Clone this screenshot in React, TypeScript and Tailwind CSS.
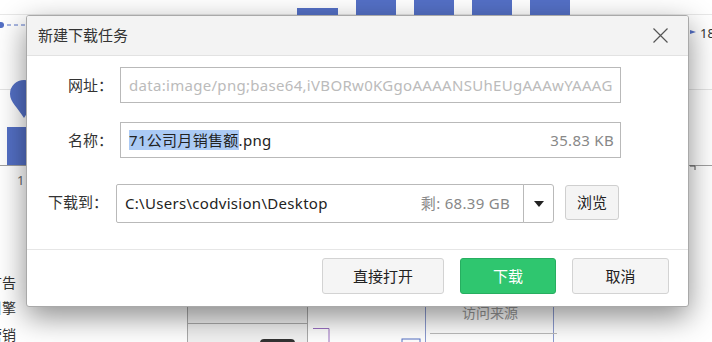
const font = "font-['Noto_Sans','Noto_Sans_CJK_SC',sans-serif]";

const Background = () => (
  <svg className="absolute inset-0" width={712} height={342} viewBox="0 0 712 342">
    <line x1={0} y1={14.5} x2={712} y2={14.5} stroke="#e8e8e8" />
    {/* bars at top */}
    <rect x={297} y={8} width={41} height={7} fill="#5470c6" />
    <rect x={356} y={0} width={40} height={15} fill="#5470c6" />
    <rect x={414} y={0} width={40} height={15} fill="#5470c6" />
    <rect x={472} y={0} width={40} height={15} fill="#5470c6" />
    <rect x={530} y={0} width={40} height={15} fill="#5470c6" />
    <line x1={0} y1={25} x2={30} y2={25} stroke="#5470c6" strokeDasharray="4 3" />
    <circle cx={1} cy={25} r={3} fill="#5470c6" />
    <line x1={0} y1={89.5} x2={712} y2={89.5} stroke="#e4e4e4" />
    <path d="M24 118 C18 108 10 102 10 94 A14 14 0 0 1 38 94 C38 102 30 108 24 118 Z" fill="#5470c6" />
    <rect x={7} y={127} width={24} height={38} fill="#5470c6" />
    <line x1={0} y1={165.5} x2={712} y2={165.5} stroke="#a0a0a0" />
    <line x1={690} y1={166} x2={695} y2={166} stroke="#555" />
    <line x1={695} y1={166} x2={695} y2={170} stroke="#555" />
    <text x={17} y={185} fontSize={13} fill="#666" fontFamily="Noto Sans">1</text>
    <text x={16} y={288} fontSize={14} fill="#333" textAnchor="end" fontFamily="Noto Sans CJK SC">广告</text>
    <text x={16} y={313} fontSize={14} fill="#333" textAnchor="end" fontFamily="Noto Sans CJK SC">引擎</text>
    <text x={16} y={340} fontSize={14} fill="#333" textAnchor="end" fontFamily="Noto Sans CJK SC">营销</text>
    <path d="M690 30 L696 32 L690 34 Z" fill="#5470c6" />
    <text x={700} y={38} fontSize={13} fill="#333" fontFamily="Noto Sans">18</text>
    {/* table fragments below dialog */}
    <rect x={187.5} y={290.5} width={120} height={60} fill="#f2f2f2" stroke="#aaa" />
    <line x1={187} y1={323.5} x2={307} y2={323.5} stroke="#aaa" />
    <text x={192} y={354} fontSize={14} fill="#333" fontFamily="Noto Sans CJK SC">其他</text>
    <rect x={260} y={339} width={35} height={10} rx={4} fill="#333" />
    <path d="M313 328.5 H329 V342" stroke="#9b6fc2" fill="none" />
    <rect x={402} y={339} width={18} height={8} fill="none" stroke="#5470c6" />
    <line x1={425.5} y1={290} x2={425.5} y2={342} stroke="#8c9bd0" />
    <line x1={553.5} y1={290} x2={553.5} y2={342} stroke="#8c9bd0" />
    <text x={462} y={318} fontSize={14} fill="#999" fontFamily="Noto Sans CJK SC">访问来源</text>
    <line x1={430} y1={333.5} x2={557} y2={333.5} stroke="#bbb" />
  </svg>
);

const Field = ({ children, className }: { children: React.ReactNode; className?: string }) => (
  <div className={`flex items-center border border-[#b9b9b9] bg-white pl-[8px] tracking-[0.3px] ${className ?? ""}`}>
    {children}
  </div>
);

export default function App() {
  return (
    <div className={`relative w-[712px] h-[342px] overflow-hidden bg-white ${font}`}>
      <Background />

      {/* Dialog */}
      <div className="absolute left-[26px] top-[15px] w-[663px] h-[292px] flex flex-col rounded-[3px] border border-[#a9a9a9] bg-white shadow-[0_10px_30px_rgba(0,0,0,0.45)] overflow-hidden">
        <div className="h-[40px] shrink-0 flex items-center justify-between pl-[11px] pr-[20px] bg-[#f3f3f3] border-b border-[#e2e2e2]">
          <span className="text-[15px] text-[#333]">新建下载任务</span>
          <svg width={15} height={15} viewBox="0 0 15 15">
            <path d="M0.5 0.5 L14.5 14.5 M14.5 0.5 L0.5 14.5" stroke="#555" strokeWidth={1.2} />
          </svg>
        </div>

        <div className="flex-1 flex flex-col pt-[11px]">
          <div className="flex items-center">
            <span className="w-[86px] text-right text-[15px] text-[#333]">网址：</span>
            <Field className="ml-[7px] w-[501px] h-[36px] overflow-hidden">
              <span className="text-[15px] text-[#bbbbbb] whitespace-nowrap">
                data:image/png;base64,iVBORw0KGgoAAAANSUhEUgAAAwYAAAG
              </span>
            </Field>
          </div>

          <div className="flex items-center mt-[19px]">
            <span className="w-[86px] text-right text-[15px] text-[#333]">名称：</span>
            <Field className="ml-[7px] w-[501px] h-[36px] justify-between pr-[6px]">
              <span className="text-[15px] text-[#222] whitespace-nowrap">
                <span className="bg-[#abcaf5]">71公司月销售额</span>.png
              </span>
              <span className="text-[15px] text-[#888]">35.83 KB</span>
            </Field>
          </div>

          <div className="flex items-start mt-[26px]">
            <span className="w-[81px] mt-[7px] text-right text-[15px] text-[#333]">下载到：</span>
            <div className="ml-[8px] flex">
              <Field className="w-[408px] h-[39px] justify-between pr-[13px] rounded-l-[2px]">
                <span className="text-[15px] text-[#222] whitespace-nowrap">C:\Users\codvision\Desktop</span>
                <span className="text-[15px] text-[#888] whitespace-nowrap">剩: 68.39 GB</span>
              </Field>
              <div className="w-[31px] h-[39px] -ml-px flex items-center justify-center border border-[#b9b9b9] rounded-r-[3px] bg-white">
                <svg width={10} height={6} viewBox="0 0 10 6">
                  <path d="M0 0 H10 L5 6 Z" fill="#222" />
                </svg>
              </div>
            </div>
            <button className="ml-[11px] mt-[1px] w-[54px] h-[35px] rounded-[3px] border border-[#cfcfcf] bg-[#f4f4f4] text-[15px] text-[#222]">
              浏览
            </button>
          </div>
        </div>

        <div className="h-[57px] shrink-0 flex justify-end gap-[16px] pt-[8px] pr-[19px] border-t border-[#e6e6e6]">
          <button className="w-[122px] h-[36px] rounded-[3px] border border-[#d3d3d3] bg-[#f5f5f5] text-[15px] text-[#222]">
            直接打开
          </button>
          <button className="w-[96px] h-[36px] rounded-[3px] border border-[#27ae60] bg-[#2fc66f] text-[15px] text-white">
            下载
          </button>
          <button className="w-[97px] h-[36px] rounded-[3px] border border-[#d3d3d3] bg-[#f5f5f5] text-[15px] text-[#222]">
            取消
          </button>
        </div>
      </div>
    </div>
  );
}
